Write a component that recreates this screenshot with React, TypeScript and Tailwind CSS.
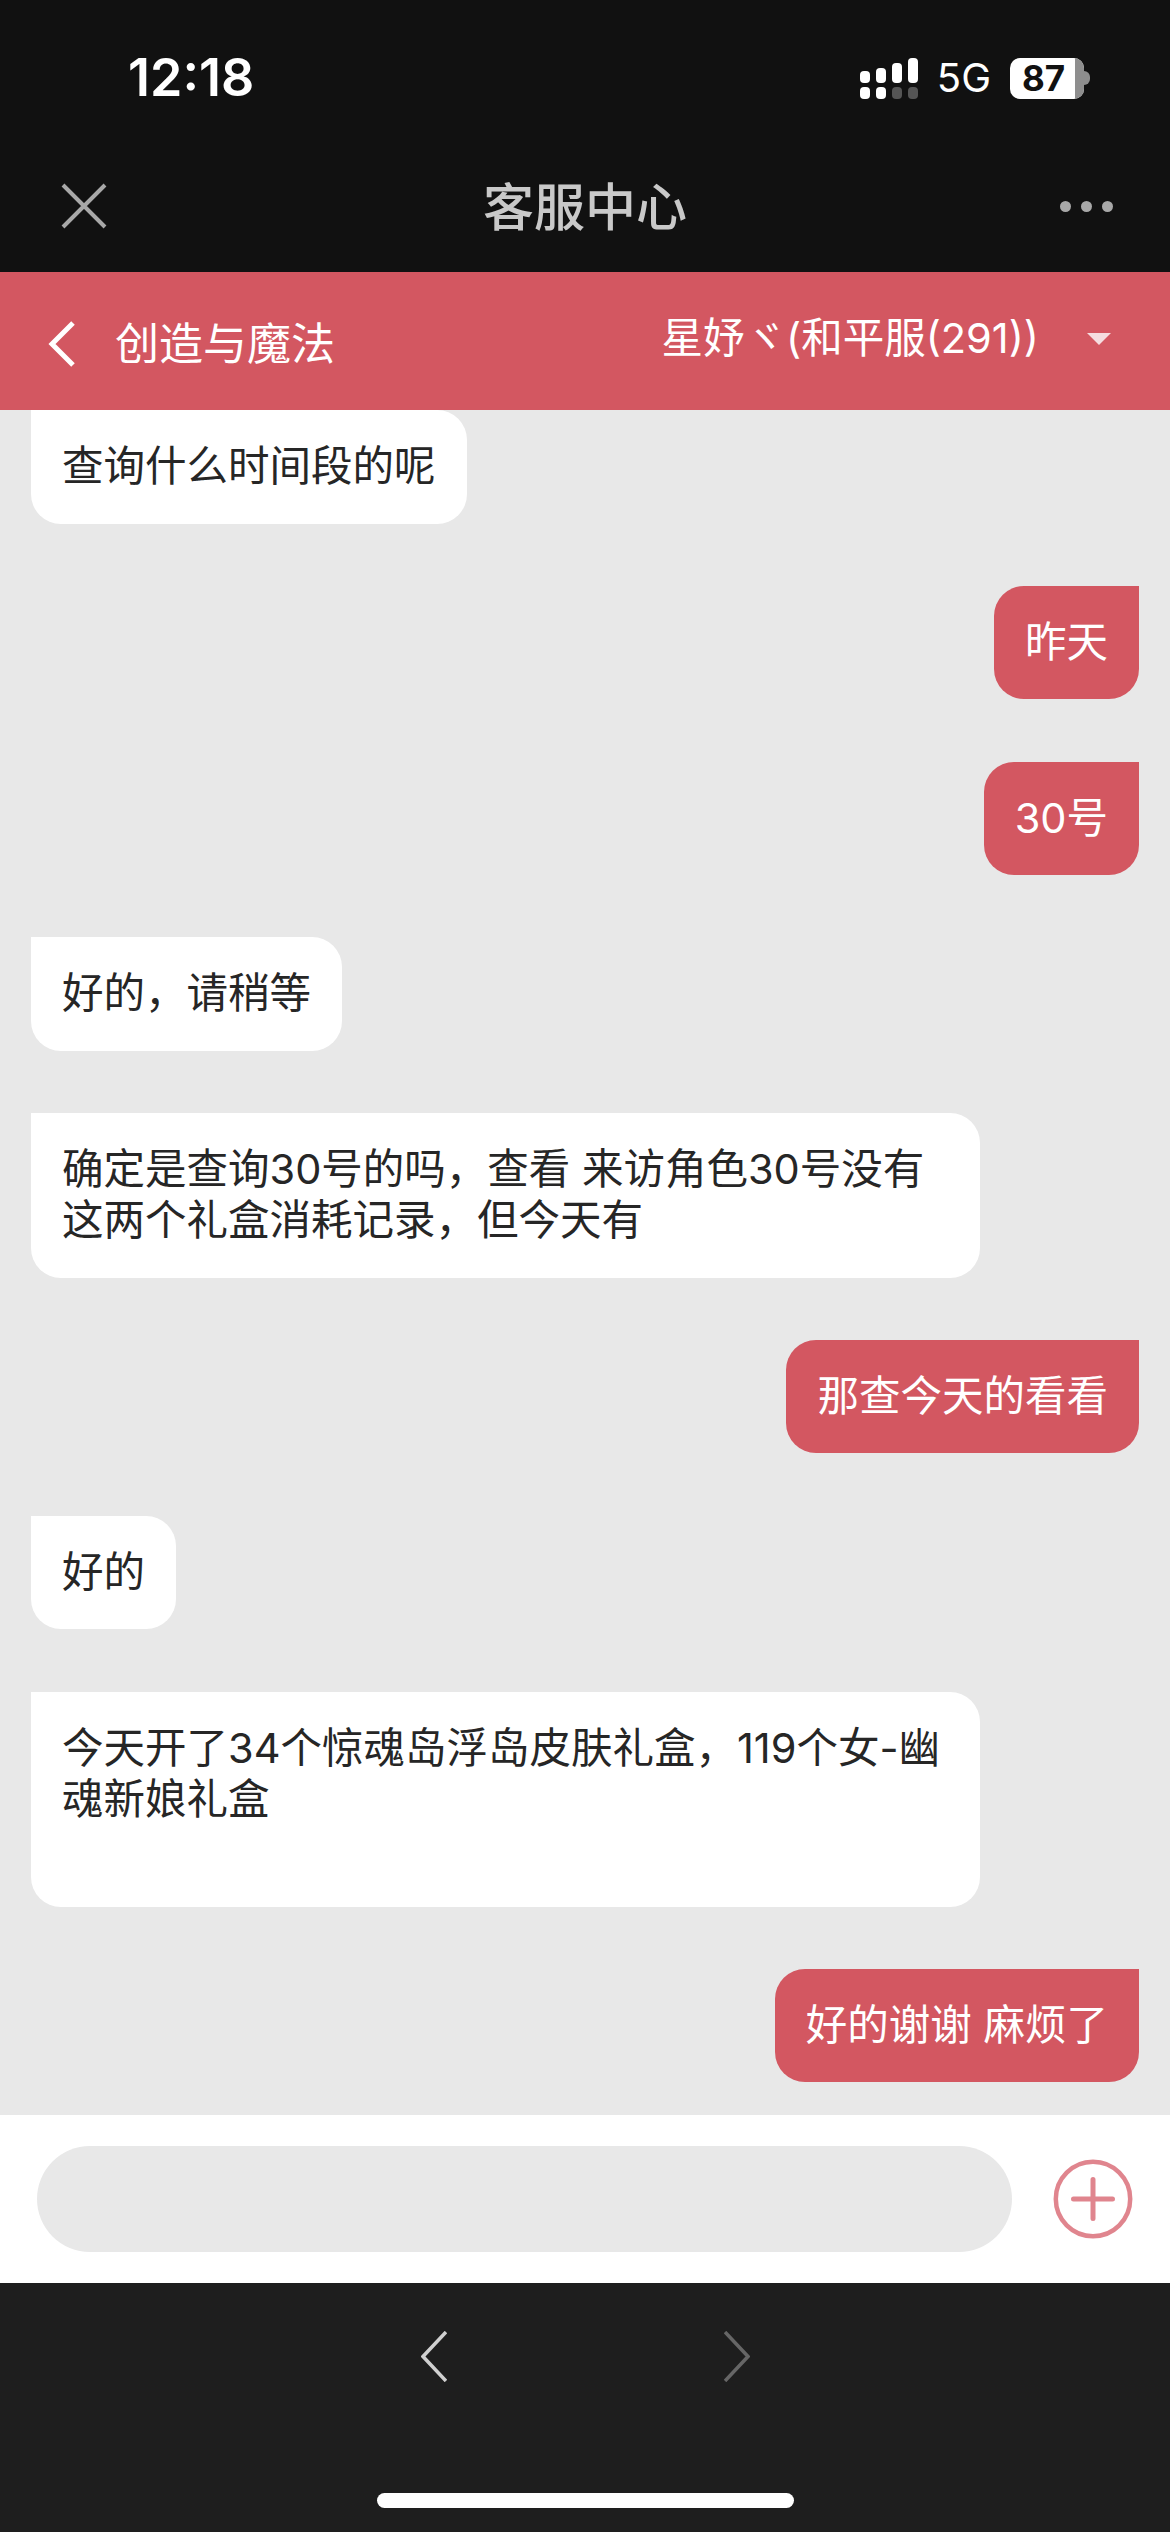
const font = { fontFamily: 'Inter, "Noto Sans CJK SC", "Noto Sans", sans-serif' };

type Msg = { from: 'them' | 'me'; text: string; extra?: boolean; wide?: boolean };

const messages: Msg[] = [
  { from: 'them', text: '查询什么时间段的呢' },
  { from: 'me', text: '昨天' },
  { from: 'me', text: '30号' },
  { from: 'them', text: '好的，请稍等' },
  { from: 'them', text: '确定是查询30号的吗，查看 来访角色30号没有这两个礼盒消耗记录，但今天有', wide: true },
  { from: 'me', text: '那查今天的看看' },
  { from: 'them', text: '好的' },
  { from: 'them', text: '今天开了34个惊魂岛浮岛皮肤礼盒，119个女-幽魂新娘礼盒', wide: true, extra: true },
  { from: 'me', text: '好的谢谢 麻烦了' },
];

function SignalIcon() {
  return (
    <svg width="58" height="41" viewBox="0 0 58 41" fill="none">
      <rect x="0" y="13" width="10" height="12" rx="4" fill="#fff" />
      <rect x="16" y="10" width="10" height="15" rx="4" fill="#fff" />
      <rect x="32" y="5" width="10" height="20" rx="4" fill="#fff" />
      <rect x="48" y="0" width="10" height="25" rx="4" fill="#fff" />
      <rect x="0" y="29" width="10" height="12" rx="4" fill="#fff" />
      <rect x="16" y="29" width="10" height="12" rx="4" fill="#fff" />
      <rect x="32" y="29" width="10" height="12" rx="4" fill="#555" />
      <rect x="48" y="29" width="10" height="12" rx="4" fill="#555" />
    </svg>
  );
}

function Battery() {
  return (
    <div className="flex items-center">
      <div className="flex h-[41px] w-[74px] items-stretch overflow-hidden rounded-[10px] bg-white">
        <span className="flex flex-1 items-center justify-center pl-[2px] text-[35px] font-bold leading-none text-[#111]">87</span>
        <div className="w-[9px] bg-[#8e8e8e]" />
      </div>
      <div className="h-[14px] w-[6px] rounded-r-full bg-[#8e8e8e]" />
    </div>
  );
}

function PlusIcon() {
  return (
    <svg width="80" height="80" viewBox="0 0 80 80" fill="none">
      <circle cx="40" cy="40" r="37.2" stroke="#e0858e" strokeWidth="4.5" />
      <path d="M20.5 40H59.5M40 20.5V59.5" stroke="#e0858e" strokeWidth="5" strokeLinecap="round" />
    </svg>
  );
}

function Bubble({ msg }: { msg: Msg }) {
  const isMe = msg.from === 'me';
  return (
    <div className={isMe ? 'flex justify-end' : 'flex justify-start'}>
      <div
        className={
          (isMe ? 'rounded-[30px] rounded-tr-none bg-[#d35761] text-white' : 'rounded-[30px] rounded-tl-none bg-white text-[#262626]') +
          (msg.wide ? ' w-[949px]' : '') +
          (msg.extra ? ' pb-[82px]' : ' pb-[31.5px]') +
          ' px-[31px] pt-[31px] text-[41.5px] leading-[51px]'
        }
      >
        {msg.text}
      </div>
    </div>
  );
}

export default function App() {
  return (
    <div className="flex h-[2532px] w-[1170px] flex-col overflow-hidden bg-[#e8e8e8]" style={font}>
      <div className="h-[272px] shrink-0 bg-[#111111]">
        <div className="flex h-[156px] items-center justify-between pl-[128px] pr-[80px]">
          <span className="text-[52px] font-semibold leading-none text-white">12:18</span>
          <div className="flex items-center gap-[19px]">
            <SignalIcon />
            <span className="text-[40px] leading-none text-white">5G</span>
            <Battery />
          </div>
        </div>
        <div className="relative flex h-[100px] items-center justify-between pl-[61px] pr-[57px]">
          <svg width="46" height="46" viewBox="0 0 46 46" fill="none">
            <path d="M2 2L44 44M44 2L2 44" stroke="#a8a8a8" strokeWidth="4" />
          </svg>
          <span className="absolute bottom-[23px] left-0 right-0 text-center text-[51px] font-medium leading-none text-[#c9c9c9]">客服中心</span>
          <div className="flex gap-[10px]">
            <div className="h-[11px] w-[11px] rounded-full bg-[#a8a8a8]" />
            <div className="h-[11px] w-[11px] rounded-full bg-[#a8a8a8]" />
            <div className="h-[11px] w-[11px] rounded-full bg-[#a8a8a8]" />
          </div>
        </div>
      </div>

      <div className="flex h-[138px] shrink-0 items-center bg-[#d35761] pl-[48px] pr-[59px] text-white">
        <svg width="28" height="46" viewBox="0 0 28 46" fill="none" className="mt-[6px] shrink-0">
          <path d="M25 2L4 23L25 44" stroke="#fff" strokeWidth="5" />
        </svg>
        <span className="ml-[39px] mt-[5px] text-[44px] leading-none">创造与魔法</span>
        <span className="ml-auto mb-[4px] text-[41.5px] leading-none">星妤ヾ(和平服(291))</span>
        <div className="mb-[4px] ml-[48px] h-0 w-0 border-x-[12px] border-t-[12px] border-x-transparent border-t-[#f5dde0]" />
      </div>

      <div className="flex h-[1705px] shrink-0 flex-col gap-[62.3px] overflow-hidden px-[31px]">
        {messages.map((m, i) => (
          <Bubble key={i} msg={m} />
        ))}
      </div>

      <div className="flex h-[168px] shrink-0 items-center bg-white pl-[37px] pr-[37px]">
        <div className="h-[106px] w-[975px] rounded-full bg-[#e8e8e8]" />
        <div className="ml-[41px] shrink-0"><PlusIcon /></div>
      </div>

      <div className="relative flex-1 bg-[#1e1e1e]">
        <div className="flex items-start justify-center gap-[277px] pt-[48px]">
          <svg width="26" height="51" viewBox="0 0 26 51" fill="none">
            <path d="M25 1L2 25.5L25 50" stroke="#d0d0d0" strokeWidth="3.5" />
          </svg>
          <svg width="26" height="51" viewBox="0 0 26 51" fill="none">
            <path d="M1 1L24 25.5L1 50" stroke="#666666" strokeWidth="3.5" />
          </svg>
        </div>
        <div className="absolute bottom-[24px] left-[377px] h-[15px] w-[417px] rounded-full bg-white" />
      </div>
    </div>
  );
}
